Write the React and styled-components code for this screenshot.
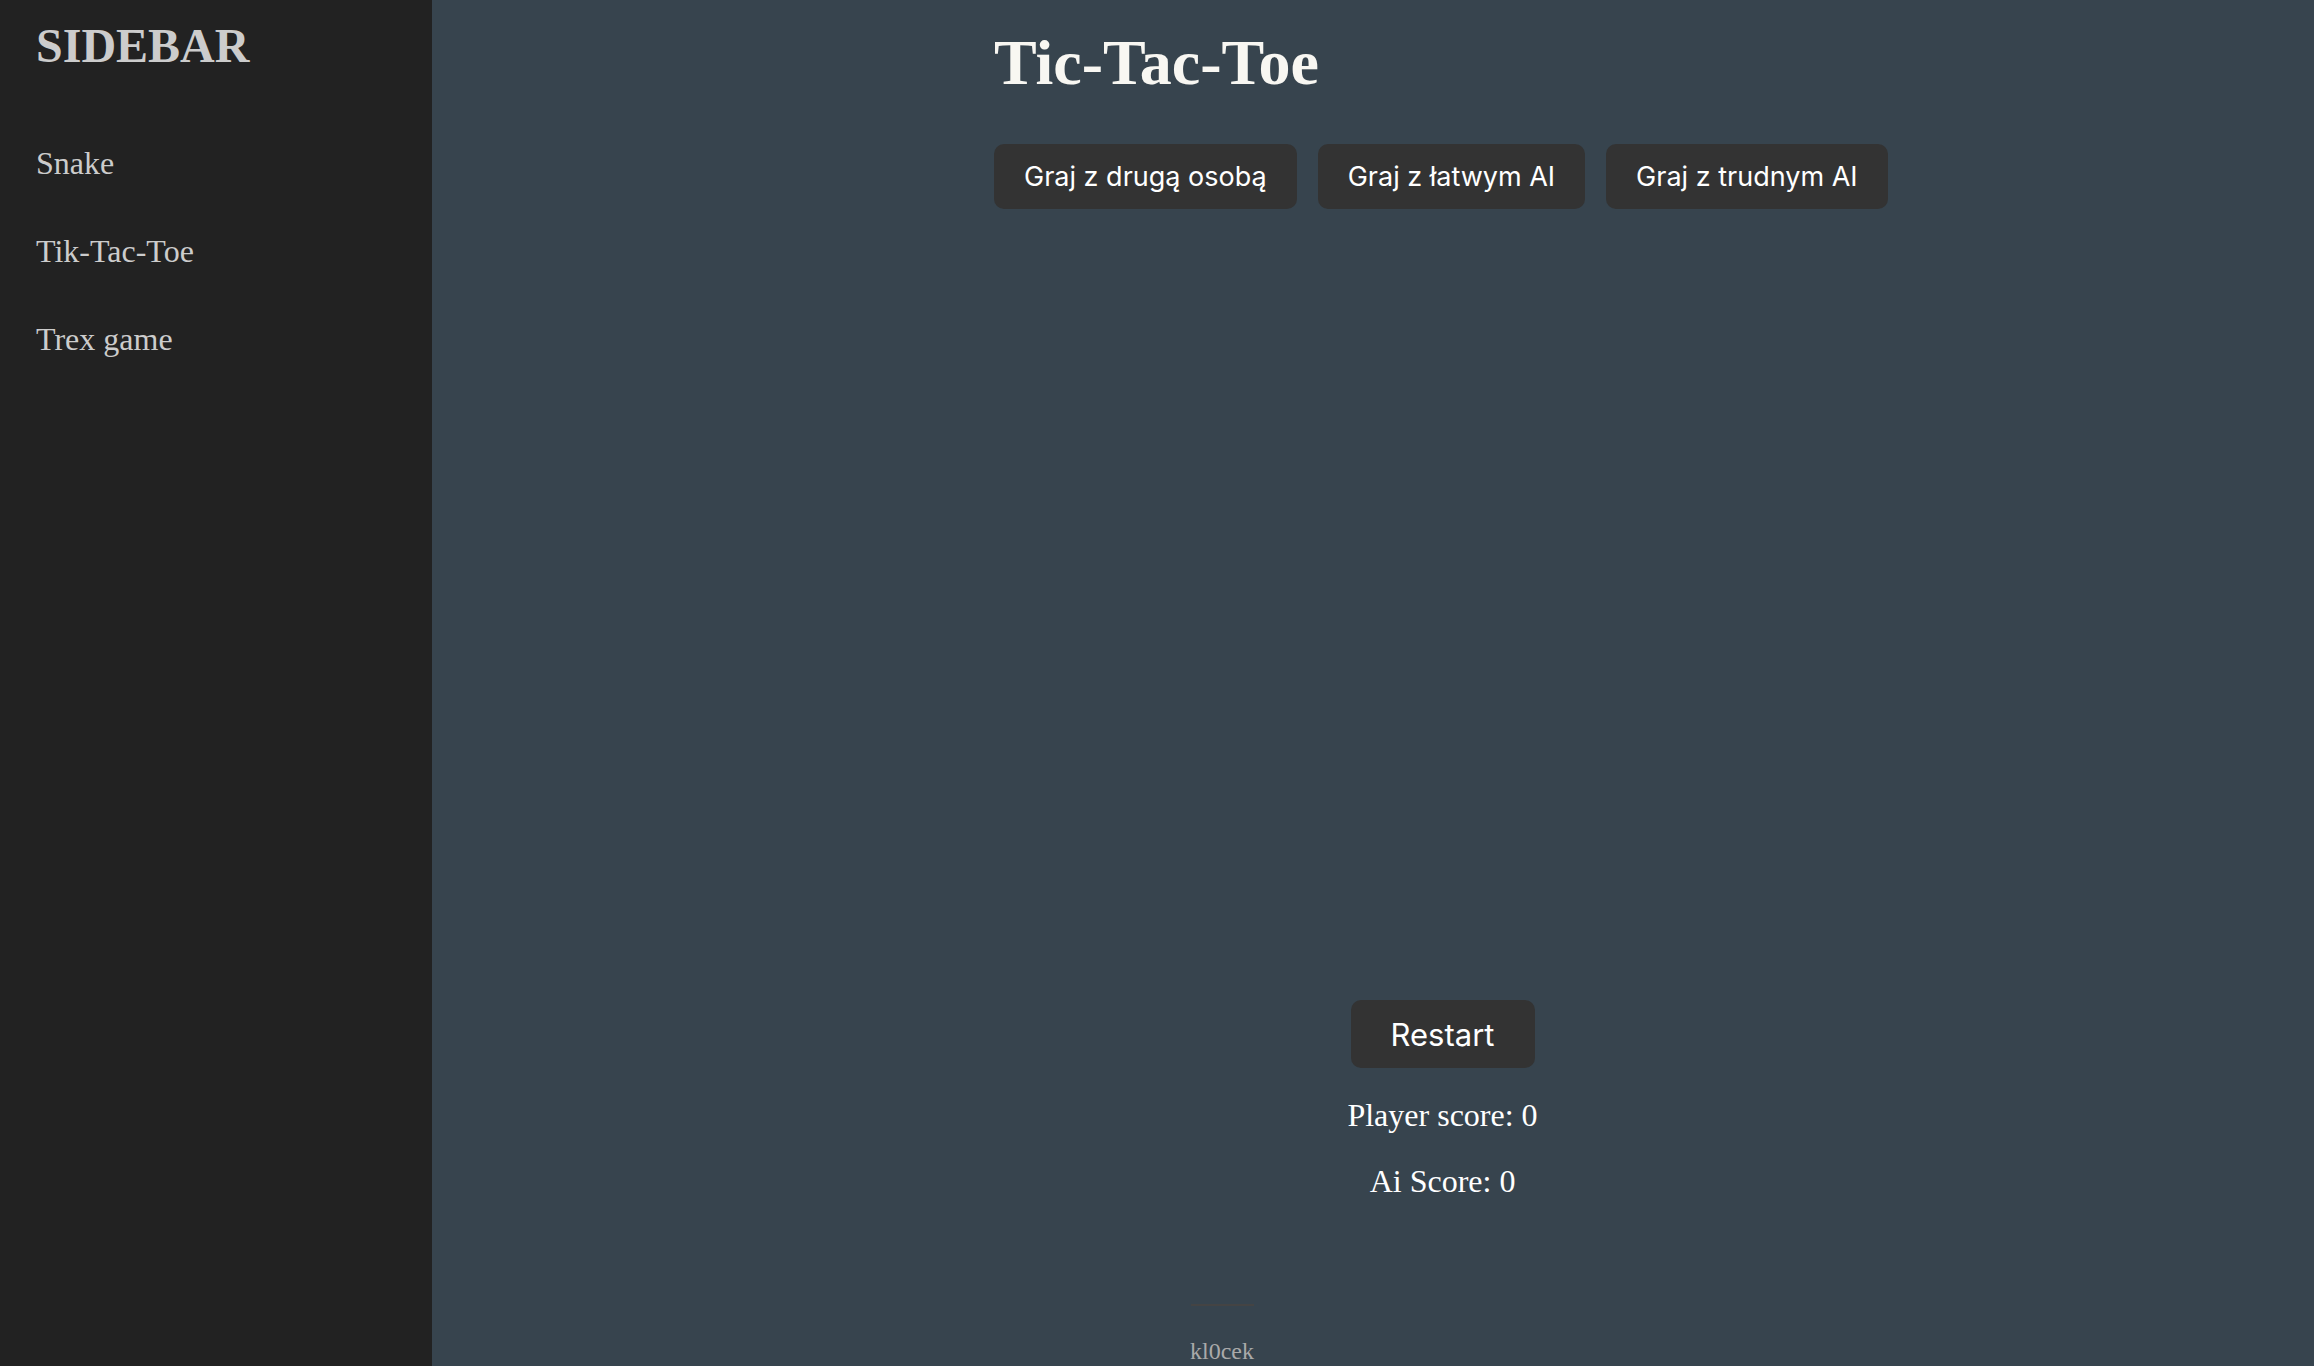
import React, { useState } from "react";
import styled, { createGlobalStyle } from "styled-components";

const GlobalStyle = createGlobalStyle`
  body {
    margin: 0;
    background: #37444e;
    font-family: "Liberation Serif", "Times New Roman", serif;
  }
`;

const games = ["Snake", "Tik-Tac-Toe", "Trex game"];
const modes = ["Graj z drugą osobą", "Graj z łatwym AI", "Graj z trudnym AI"];

export default function App() {
  const [playerScore, setPlayerScore] = useState(0);
  const [aiScore, setAiScore] = useState(0);

  const restart = () => {
    setPlayerScore(0);
    setAiScore(0);
  };

  return (
    <Layout>
      <GlobalStyle />
      <Sidebar>
        <SidebarTitle>SIDEBAR</SidebarTitle>
        <Nav>
          {games.map((g) => (
            <NavItem key={g}>{g}</NavItem>
          ))}
        </Nav>
      </Sidebar>

      <Main>
        <Game>
          <Title>Tic-Tac-Toe</Title>
          <Modes>
            {modes.map((m) => (
              <ModeButton key={m}>{m}</ModeButton>
            ))}
          </Modes>
          <Board />
          <Controls>
            <RestartButton onClick={restart}>Restart</RestartButton>
            <Score>Player score: {playerScore}</Score>
            <Score>Ai Score: {aiScore}</Score>
          </Controls>
        </Game>
        <Footer>
          <Rule />
          <Author>kl0cek</Author>
        </Footer>
      </Main>
    </Layout>
  );
}

const Layout = styled.div`
  display: flex;
  min-height: 100vh;
`;

const Sidebar = styled.aside`
  width: 432px;
  flex-shrink: 0;
  box-sizing: border-box;
  padding: 22px 36px;
  background: #222222;
  color: #cccccc;
`;

const SidebarTitle = styled.h2`
  margin: 0;
  font-size: 48px;
  line-height: 1;
  font-weight: bold;
`;

const Nav = styled.nav`
  display: flex;
  flex-direction: column;
  gap: 56px;
  margin-top: 77px;
`;

const NavItem = styled.a`
  font-size: 32px;
  line-height: 1;
  color: #cccccc;
  cursor: pointer;
`;

const Main = styled.main`
  flex: 1;
  display: flex;
  flex-direction: column;
  padding-left: 562px;
`;

const Game = styled.section`
  width: 897px;
  display: flex;
  flex-direction: column;
`;

const Title = styled.h1`
  margin: 31px 0 0;
  font-size: 64px;
  line-height: 1;
  font-weight: bold;
  color: #f8f7f2;
`;

const Modes = styled.div`
  display: flex;
  gap: 21px;
  margin-top: 49px;
`;

const ModeButton = styled.button`
  height: 65px;
  padding: 0 30px;
  border: none;
  border-radius: 10px;
  background: #333333;
  color: #ffffff;
  font-family: Inter, "Noto Sans", sans-serif;
  font-size: 27px;
  cursor: pointer;
`;

const Board = styled.div`
  height: 791px;
`;

const Controls = styled.div`
  display: flex;
  flex-direction: column;
  align-items: center;
`;

const RestartButton = styled.button`
  width: 184px;
  height: 68px;
  border: none;
  border-radius: 10px;
  background: #333333;
  color: #ffffff;
  font-family: Inter, "Noto Sans", sans-serif;
  font-size: 31px;
  cursor: pointer;
`;

const Score = styled.p`
  margin: 0;
  font-size: 32px;
  line-height: 66px;
  color: #ffffff;
  &:first-of-type {
    margin-top: 14px;
  }
`;

const Footer = styled.footer`
  width: 1580px;
  margin-left: -562px;
  margin-top: 90px;
  display: flex;
  flex-direction: column;
  align-items: center;
`;

const Rule = styled.hr`
  width: 63px;
  margin: 0;
  border: none;
  border-top: 2px solid #444444;
`;

const Author = styled.span`
  margin-top: 33px;
  font-size: 24px;
  line-height: 1;
  color: #aaaaaa;
`;
